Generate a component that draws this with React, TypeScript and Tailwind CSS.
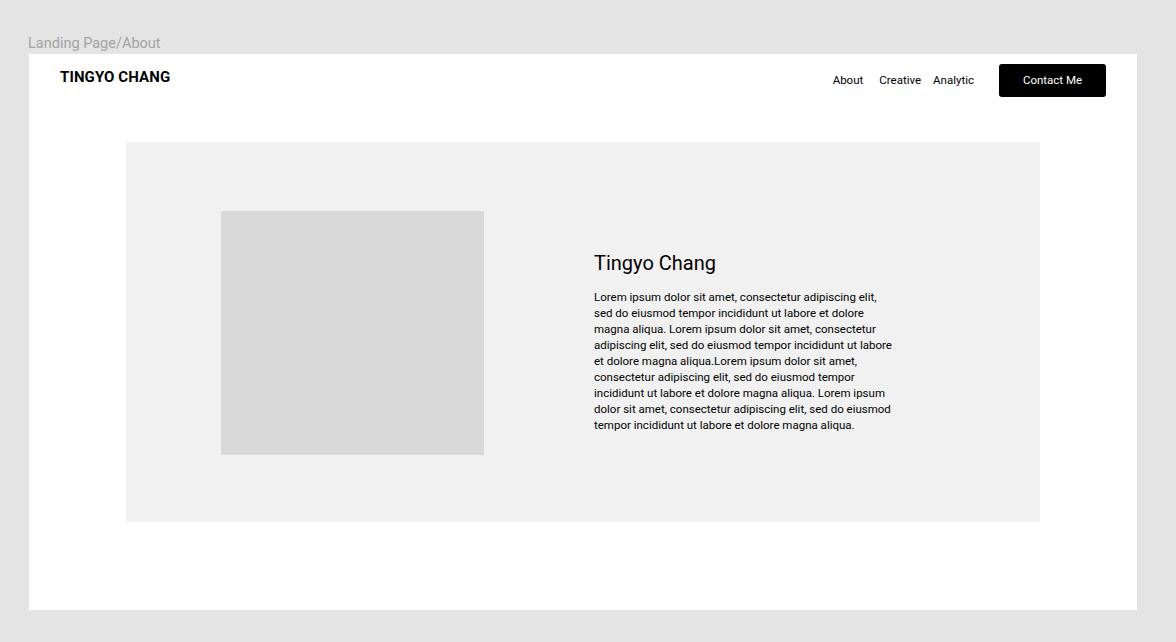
export default function App() {
  return (
    <div className="min-h-[642px] w-full bg-[#e4e4e4] pt-[35px] font-['Roboto',sans-serif]">
      <p className="ml-[28px] text-[14.5px] leading-[18px] text-[#a3a3a3]">Landing Page/About</p>
      <div className="ml-[29px] mt-[1px] h-[556px] w-[1108px] bg-white">
        <header className="flex items-start px-[31px] pt-[10px]">
          <div className="mt-[4px] text-[15px] font-bold leading-[18px] tracking-[0.1px] text-black">
            TINGYO CHANG
          </div>
          <nav className="ml-auto mt-[9px] flex text-[11.5px] leading-[14px] text-black">
            <a className="mr-[16px]">About</a>
            <a className="mr-[12px]">Creative</a>
            <a>Analytic</a>
          </nav>
          <button className="ml-[25px] flex h-[33px] w-[107px] items-center justify-center rounded-[3px] bg-black text-[11.5px] text-white">
            Contact Me
          </button>
        </header>
        <section className="ml-[97px] mt-[45px] flex h-[380px] w-[914px] items-start bg-[#f1f1f1]">
          <div className="ml-[95px] mt-[69px] h-[244px] w-[263px] bg-[#d9d9d9]" />
          <div className="ml-[110px] mt-[109px] w-[298px]">
            <h1 className="text-[20px] leading-[24px] text-black">Tingyo Chang</h1>
            <p className="mt-[14px] text-[11.5px] leading-[16px] text-black">
              Lorem ipsum dolor sit amet, consectetur adipiscing elit, sed do eiusmod tempor incididunt ut labore et dolore magna aliqua. Lorem ipsum dolor sit amet, consectetur adipiscing elit, sed do eiusmod tempor incididunt ut labore et dolore magna aliqua.Lorem ipsum dolor sit amet, consectetur adipiscing elit, sed do eiusmod tempor incididunt ut labore et dolore magna aliqua. Lorem ipsum dolor sit amet, consectetur adipiscing elit, sed do eiusmod tempor incididunt ut labore et dolore magna aliqua.
            </p>
          </div>
        </section>
      </div>
    </div>
  );
}
